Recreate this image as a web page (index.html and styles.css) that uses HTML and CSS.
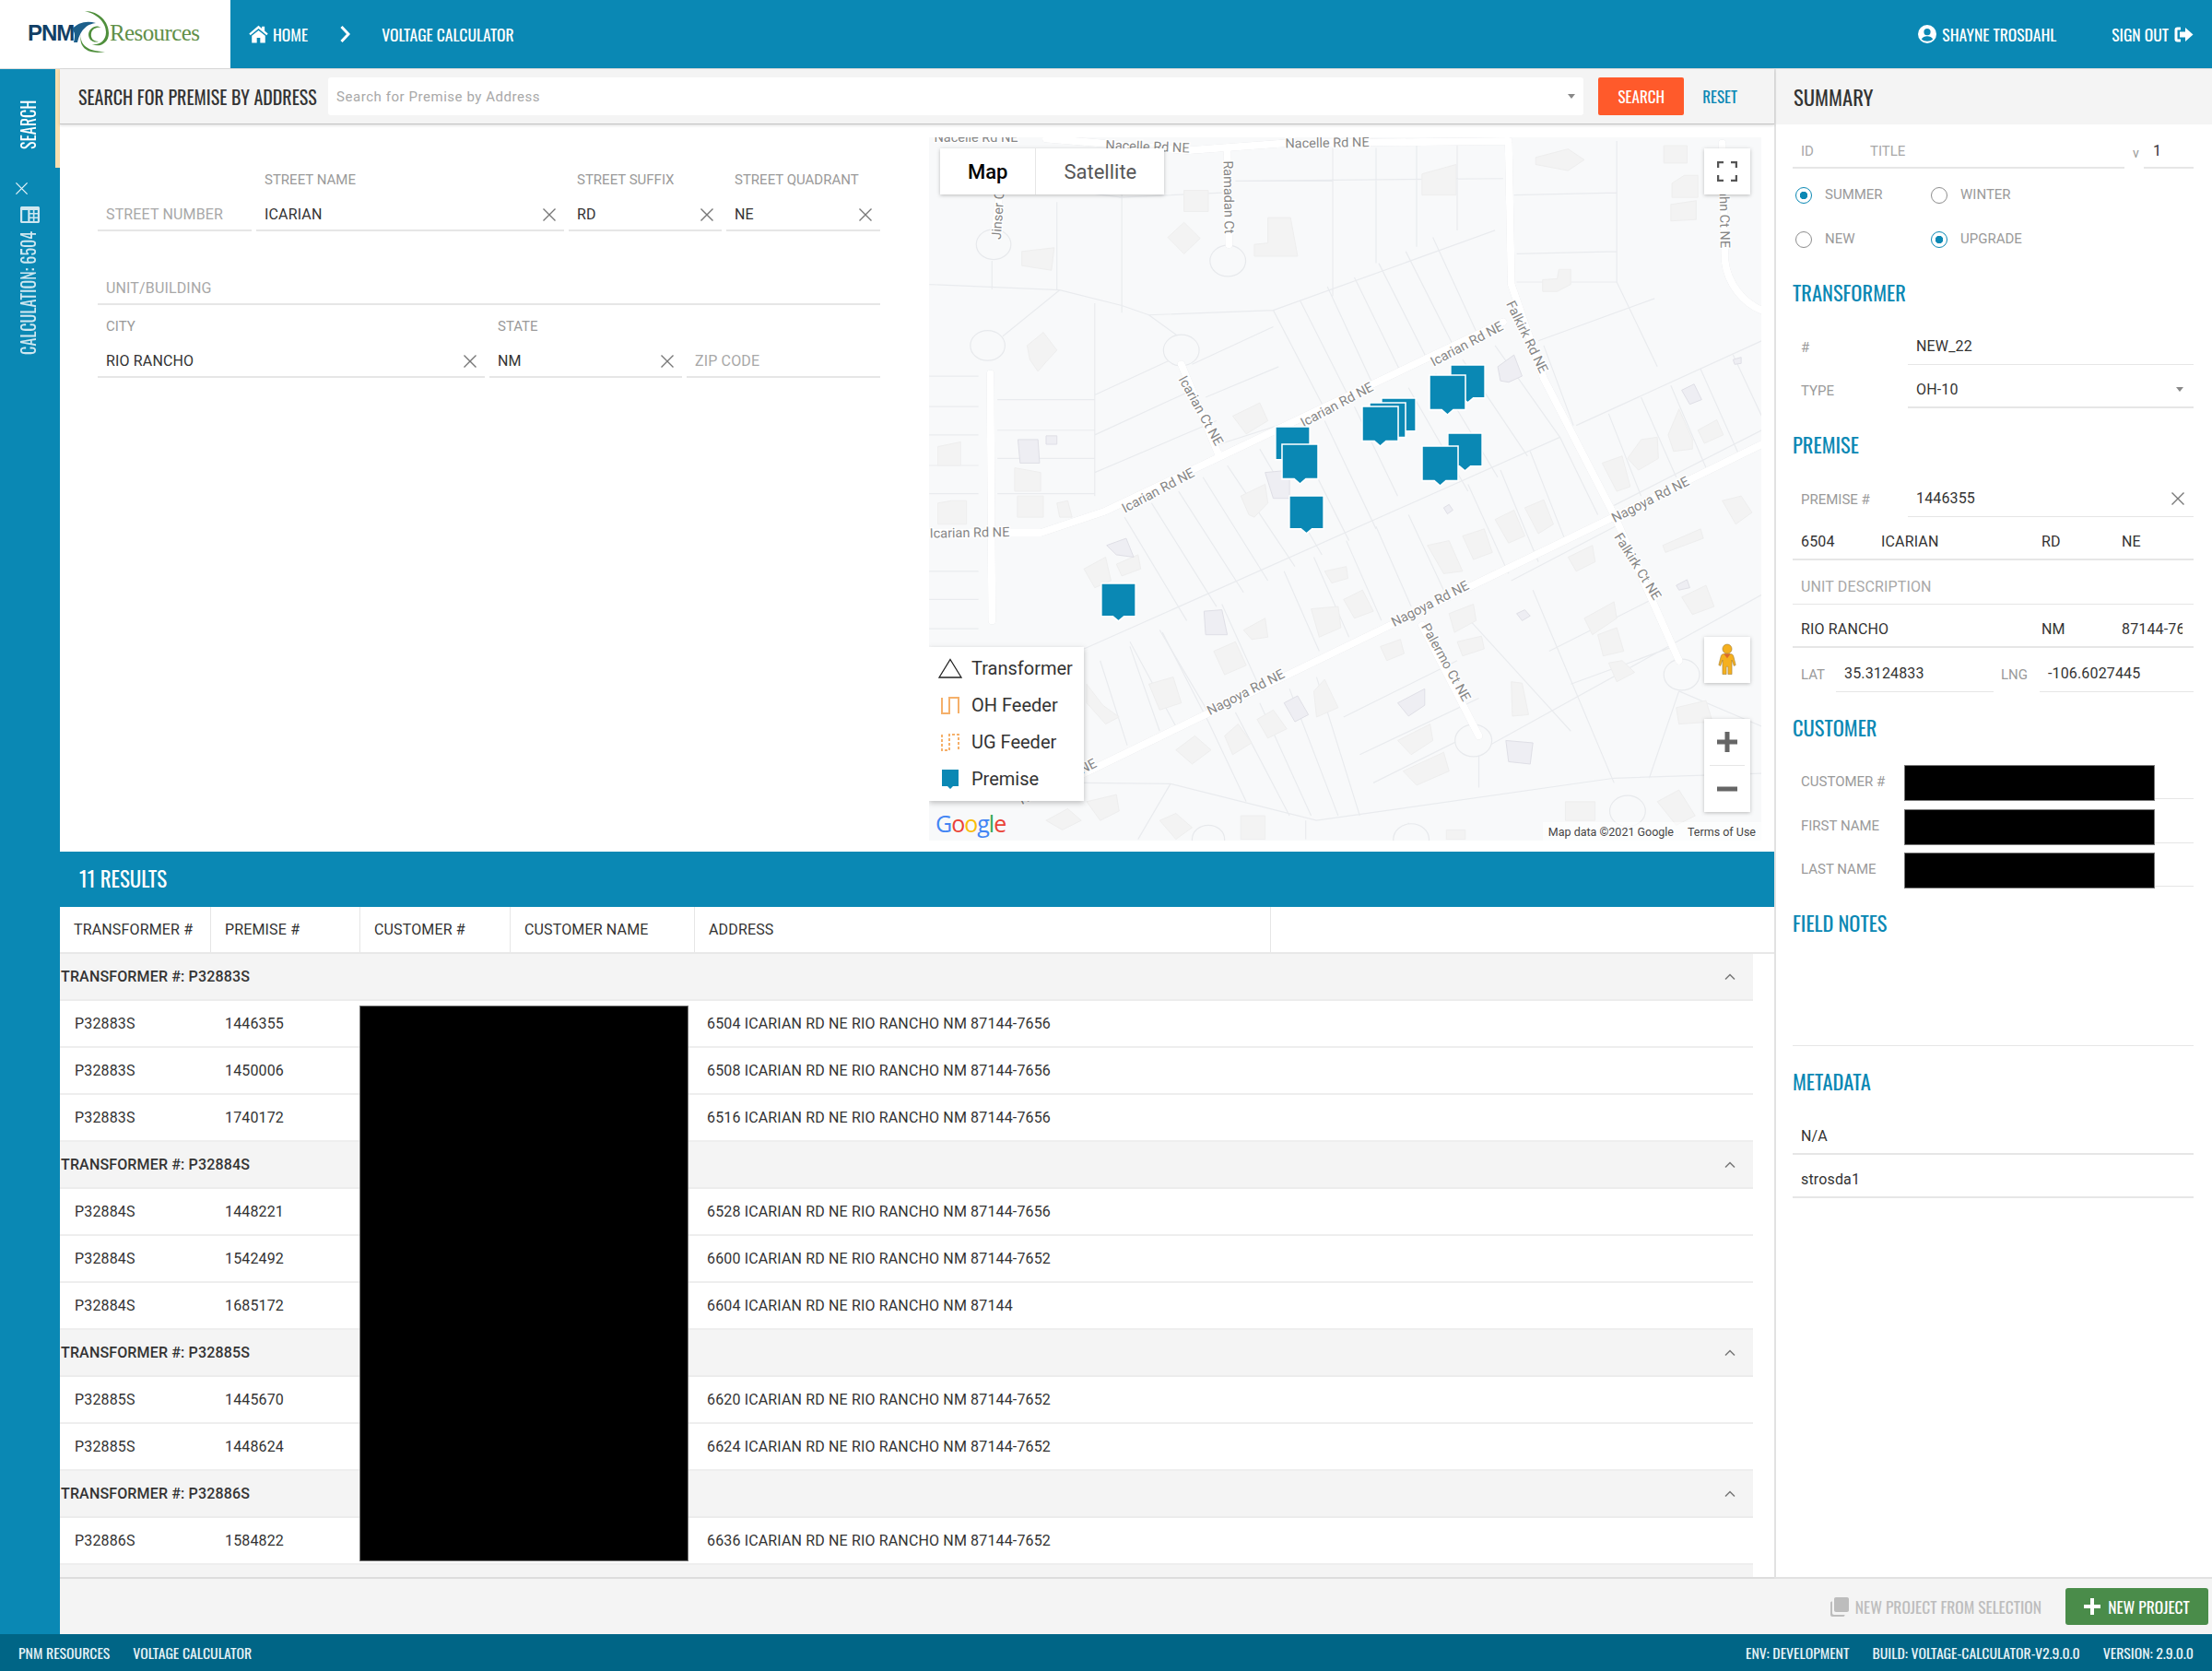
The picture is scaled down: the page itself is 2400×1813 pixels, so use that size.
FILE: index.html
```html
<!DOCTYPE html>
<html lang="en">
<head>
    <meta charset="UTF-8">
    <title>Voltage Calculator</title>
    <link rel="stylesheet" href="styles.css">
</head>
<body>
    <svg class="sprite" width="0" height="0">
        <symbol id="i-x" viewBox="0 0 16 16"><path d="M1.500 1.500 14.500 14.500M14.500 1.500 1.500 14.500" fill="none" stroke="currentColor" stroke-width="1.400"/></symbol>
        <symbol id="i-up" viewBox="0 0 16 16"><path d="M3 10.500 8 5.500 13 10.500" fill="none" stroke="currentColor" stroke-width="1.500"/></symbol>
        <symbol id="i-pin" viewBox="0 0 42 46"><path d="M1 1H41V39.500H27.500L21 45 14.500 39.500H1Z" fill="#0a88b4" stroke="#fff" stroke-width="1.600"/></symbol>
    </svg>

    <header class="topbar">
        <div class="logo">
            <span class="logo-pnm">PNM</span>
            <span class="logo-res">Resources</span>
            <svg class="logo-swoosh" viewBox="0 0 250 74" width="250" height="74">
                <path d="M78 32C84 24 95 22 104 25 96 26 88 30 84 46H80C82 38 81 34 78 32Z" fill="#1d5f8a"/>
                <path d="M92 12C108 12 118 24 118 36 118 47 108 52 100 48 108 49 115 44 115 35 115 24 105 15 92 12Z" fill="#4f8f3c"/>
                <path d="M110 30C104 26 97 30 96 37 96 44 102 47 107 45 101 45 98 41 99 36 100 31 105 29 110 30Z" fill="#4f8f3c"/>
                <path d="M88 36C86 46 92 56 114 56 100 59 84 55 88 36Z" fill="#4f8f3c"/>
            </svg>
        </div>
        <nav class="nav">
            <svg class="nav-home" viewBox="0 0 24 22" width="23" height="20"><path d="M12 .8 .8 10.400 2.300 12.300 12 4.400 21.700 12.300 23.200 10.400 19.300 7.100V1.800H16V4.300Z" fill="#fff"/><path d="M12 6.500 4 13V21.500H10V15.300H14V21.500H20V13Z" fill="#fff"/></svg>
            <a class="nav-link">Home</a>
            <svg class="nav-chevron" viewBox="0 0 12 20" width="12" height="20"><path d="M2.500 2 10 10 2.500 18" fill="none" stroke="#fff" stroke-width="3"/></svg>
            <a class="nav-link">Voltage Calculator</a>
        </nav>
        <div class="user">
            <svg viewBox="0 0 20 20" width="20" height="20"><circle cx="10" cy="10" r="10" fill="#fff"/><circle cx="10" cy="7.700" r="3.600" fill="#0a88b4"/><path d="M3.800 15.600C5 12.800 7.500 12.200 10 12.200S15 12.800 16.200 15.600C13 18.500 7 18.500 3.800 15.600Z" fill="#0a88b4"/></svg>
            <a class="nav-link">Shayne Trosdahl</a>
            <a class="nav-link signout">Sign Out</a>
            <svg viewBox="0 0 21 17" width="21" height="17"><path d="M7 2H3.500C2.500 2 2 2.500 2 3.500V13.500C2 14.500 2.500 15 3.500 15H7" fill="none" stroke="#fff" stroke-width="3"/><path d="M6 5.500H12V1L20.500 8.500 12 16V11.500H6Z" fill="#fff"/></svg>
        </div>
    </header>

    <div class="app">
        <aside class="rail">
            <div class="rail-tab"><span class="rail-text">Search</span></div>
            <svg class="rail-x"><use href="#i-x"/></svg>
            <svg class="rail-calc" viewBox="0 0 19 18" width="21" height="18" preserveAspectRatio="none"><path d="M0 1.500C0 .7.7 0 1.500 0H17.500C18.300 0 19 .7 19 1.500V16.500C19 17.300 18.300 18 17.500 18H1.500C.7 18 0 17.300 0 16.500ZM2 4V16H7.500V4ZM9.500 4V7H12.500V4ZM14 4V7H17V4ZM9.500 8.500V11.500H12.500V8.500ZM14 8.500V11.500H17V8.500ZM9.500 13V16H12.500V13ZM14 13V16H17V13Z" fill="#cfe7f0" fill-rule="evenodd"/></svg>
            <span class="rail-text rail-dim">Calculation: 6504</span>
        </aside>

        <div class="work">
            <div class="work-top">
                <main class="center">
                    <div class="searchbar">
                        <h1>Search for Premise by Address</h1>
                        <div class="searchbox">
                            <span>Search for Premise by Address</span>
                            <i class="caret"></i>
                        </div>
                        <button class="btn-search">Search</button>
                        <a class="btn-reset">Reset</a>
                    </div>

                    <div class="content">
                        <form class="form">
                            <div class="form-row row-street">
                                <div class="field">
                                    <div class="input"><span class="ph">Street Number</span></div>
                                </div>
                                <div class="field">
                                    <label>Street Name</label>
                                    <div class="input">Icarian<svg class="clear"><use href="#i-x"/></svg></div>
                                </div>
                                <div class="field">
                                    <label>Street Suffix</label>
                                    <div class="input">RD<svg class="clear"><use href="#i-x"/></svg></div>
                                </div>
                                <div class="field">
                                    <label>Street Quadrant</label>
                                    <div class="input">NE<svg class="clear"><use href="#i-x"/></svg></div>
                                </div>
                            </div>
                            <div class="form-row row-unit">
                                <div class="field">
                                    <div class="input"><span class="ph">Unit/Building</span></div>
                                </div>
                            </div>
                            <div class="form-row row-city">
                                <div class="field">
                                    <label>City</label>
                                    <div class="input">Rio Rancho<svg class="clear"><use href="#i-x"/></svg></div>
                                </div>
                                <div class="field">
                                    <label>State</label>
                                    <div class="input">NM<svg class="clear"><use href="#i-x"/></svg></div>
                                </div>
                                <div class="field">
                                    <div class="input"><span class="ph">Zip Code</span></div>
                                </div>
                            </div>
                        </form>

                        <div class="map">
                            <svg class="map-base" viewBox="0 0 903 763" width="903" height="763">
                                <g transform="translate(-8 -19) scale(.5869 .5102)">
                                    <path class="lots" d="M14 350L255 362 370 395 420 415 650 405M130 300V360M250 175V362M370 140V395M130 130L370 165M365 165L555 155M580 130L1075 125M840 60V305M760 60V375M990 50V235M915 55V270M1095 160L1285 155M1100 285L1285 280M1285 45V345M1100 345H1285L1360 525M650 405L1060 235M700 385L790 590M750 355L835 565M800 335L885 535M845 305L935 510M895 280L985 485M945 250L1025 450M650 405L745 615M14 545H105M14 610H105M14 670H105M14 735H105M14 795H105M14 960H105M14 1020H105M14 1082H105M140 595H320M140 660H320M140 720H320M140 795H320M320 390V800M320 585L480 500M320 670L500 575M320 750L545 640M500 520L650 440M525 590L660 525M550 690L740 620M255 362L150 460M420 415L510 490M370 395V410"/>
                                    <path class="lots" d="M300 1125L1180 675M375 845L490 1065M425 815L545 1035M475 790L595 1005M520 760L640 980M565 735L690 950M625 700L740 925M690 665L790 895M745 640L840 870M800 610L880 800M900 570L1010 790M950 540L1065 760M1000 510L1120 715M1060 480L1180 675M1180 675L1250 840M385 1110L470 1290M440 1085L530 1260M555 1030L620 1195M670 960L735 1130M725 930L790 1100M785 895L850 1065M840 865L905 1035M900 840L965 1000M1010 775L1085 965M1070 745L1140 940M1125 705L1190 895M1140 470L1355 380M1210 650L1553 470M1270 625L1330 800M1330 590L1395 760M1385 565L1450 740M1440 530L1510 710M1500 500L1553 630M1150 480L1205 650M1280 820L1553 660"/>
                                    <path class="lots" d="M330 1150L380 1330M385 1120L440 1300M445 1090L530 1280 600 1450M580 1260L680 1480M625 1240L720 1480M680 1210L770 1480M730 1185L810 1480M780 1270L990 1150M810 1350L1030 1230M835 1410L1010 1310M1050 1330L1553 1010M1010 1060L1200 1300M1130 1000L1280 1410M1200 1200L1390 1120M1090 980L1290 860M1160 1130L1350 1020M300 1410L460 1412M460 1412L730 1490 1280 1400 1553 1390M400 1530L460 1412M1030 1420V1320M900 1495V1530M710 1490V1530M1400 1215L1345 1400M1400 1215L1553 1290"/>
                                    <g class="culs">
                                        <circle cx="133" cy="265" r="32"/><circle cx="566" cy="300" r="33"/><circle cx="122" cy="480" r="32"/><circle cx="480" cy="490" r="33"/><circle cx="1020" cy="1320" r="34"/><circle cx="1405" cy="1180" r="33"/><circle cx="1305" cy="1470" r="33"/><circle cx="905" cy="1530" r="33"/><circle cx="530" cy="1530" r="30"/>
                                    </g>
                                    <path class="bld" d="M925 115L988 95V160H925ZM485 150H530V195H485ZM455 250L485 218 515 252 485 285ZM185 280L245 272 240 320 185 310ZM640 208H682L695 290H615V265L640 262ZM1135 80L1195 62 1225 85 1195 108 1135 95ZM1372 55H1415V92H1372ZM1387 135L1410 118H1435V165H1387ZM1385 180L1432 172V212L1385 215ZM1148 340L1175 338 1178 318H1200V350L1175 365H1148ZM195 480L225 452 250 490 230 515 215 535 200 510ZM575 630L625 602 640 640 600 668ZM30 695L72 685V735H30ZM172 740L220 750V790H172ZM30 815L55 810H83V860H30ZM177 800H225V845H177ZM250 815L270 810 278 845H255ZM1380 670L1400 615 1425 680V700L1390 705ZM1435 660L1470 638 1482 670 1447 688ZM590 800L635 775 640 815 615 845 605 840ZM300 955L340 930 350 980 320 995ZM360 945L400 925 405 955 370 970ZM1000 885L1040 870 1055 920 1020 935ZM935 905L975 895 1000 960 965 965ZM1060 850L1095 830 1115 885 1085 900ZM1115 825L1150 808 1168 860 1140 880ZM1258 730L1295 715 1310 780 1285 790ZM1305 720L1330 680 1360 675 1362 720 1325 745ZM1480 810L1515 800 1535 835 1505 860ZM1370 905L1440 870 1445 890 1375 920ZM1195 930L1240 905 1245 940 1210 960ZM1405 1015L1450 990 1465 1035 1425 1052ZM1225 1060L1280 1025 1285 1060 1240 1095ZM745 960L785 950 788 975 758 985ZM720 1040L770 1035 775 1080 735 1100ZM780 1020L815 1000 835 1045 800 1060ZM595 1085L635 1060 640 1100 610 1105ZM540 1130L580 1110 600 1160 560 1180ZM848 1120L885 1105 892 1135 860 1150ZM975 1050L1020 1030 1025 1065 985 1090ZM990 1110L1035 1098 1040 1125 1000 1140ZM1250 1095L1285 1080 1298 1130 1260 1140ZM1270 1155L1295 1150 1318 1175 1285 1195ZM420 1200L465 1185 480 1240 440 1255ZM305 1200L335 1245 365 1270 340 1285 305 1240ZM725 1215L745 1190 770 1250 730 1270ZM620 1275L650 1255 675 1295 640 1315ZM560 1310L585 1285 610 1325 575 1350ZM470 1340L505 1310 535 1340 500 1370ZM1090 1195L1110 1198 1122 1265 1092 1268ZM880 1320L940 1285 945 1320 905 1350ZM890 1385L965 1345 975 1385 915 1415ZM1395 1250L1450 1235 1462 1280 1400 1285ZM305 1450L360 1435 365 1470 330 1490ZM230 1490L270 1465 295 1490 260 1510ZM440 1490L470 1475 500 1505 470 1530ZM590 1480H635V1530H590ZM1190 1450H1245V1490H1190ZM1360 1450L1400 1425 1430 1480 1395 1500ZM970 1510H1005V1530H970Z"/>
                                    <path class="bld bld-tint" d="M178 680H215L218 730H182ZM230 672H250V690H230ZM1065 525L1095 500 1110 545 1085 558 1070 555ZM1405 575L1428 562 1442 595 1420 605ZM1500 510L1515 505V518L1503 520ZM635 750L680 745V805H650ZM342 905L378 890 392 930 360 925ZM965 825L975 818 982 830 972 838ZM1395 990L1415 978 1420 995 1400 1000ZM522 1045L555 1042 565 1095H525ZM1100 1050L1115 1042 1125 1055 1110 1065ZM670 1240L695 1225 715 1265 690 1280ZM880 1240L930 1210V1245L900 1268ZM1080 1320L1130 1325 1125 1370 1085 1365Z"/>
                                    <g class="roads">
                                        <path d="M14 878H220L340 832 545 720 1075 430M300 1390L1270 850 1553 690M1085 50L1090 350 1150 550 1280 840 1400 1150M230 40L490 65 670 50 1085 45M565 65L568 265M145 150L135 235M480 520L550 715M925 1075L1030 1310M127 540L130 1065M1480 50L1485 300C1490 350 1520 390 1553 405"/>
                                    </g>
                                </g>
                                <g class="map-labels">
                                    <text transform="translate(432 7) rotate(-1)">Nacelle Rd NE</text>
                                    <text transform="translate(237 11) rotate(2)">Nacelle Rd NE</text>
                                    <text transform="translate(51 1)">Nacelle Rd NE</text>
                                    <text transform="translate(324 65) rotate(89)">Ramadan Ct</text>
                                    <text transform="translate(76 82) rotate(-86)">Jinser Ct</text>
                                    <text transform="translate(862 83) rotate(89)">Hahn Ct NE</text>
                                    <text transform="translate(584 225) rotate(-28)">Icarian Rd NE</text>
                                    <text transform="translate(443 291) rotate(-28)">Icarian Rd NE</text>
                                    <text transform="translate(249 384) rotate(-28)">Icarian Rd NE</text>
                                    <text transform="translate(44 430) rotate(-1)">Icarian Rd NE</text>
                                    <text transform="translate(294 297) rotate(61)">Icarian Ct NE</text>
                                    <text transform="translate(648 217) rotate(64)">Falkirk Rd NE</text>
                                    <text transform="translate(783 394) rotate(-27)">Nagoya Rd NE</text>
                                    <text transform="translate(544 507) rotate(-27)">Nagoya Rd NE</text>
                                    <text transform="translate(344 603) rotate(-27)">Nagoya Rd NE</text>
                                    <text transform="translate(140 700) rotate(-27)">Nagoya Rd NE</text>
                                    <text transform="translate(768 466) rotate(58)">Falkirk Ct NE</text>
                                    <text transform="translate(560 570) rotate(61)">Palermo Ct NE</text>
                                </g>
                                <use href="#i-pin" x="375" y="313" width="39" height="43"/>
                                <use href="#i-pin" x="382" y="332" width="41" height="45"/>
                                <use href="#i-pin" x="390" y="388" width="39" height="43"/>
                                <use href="#i-pin" x="490" y="282" width="39" height="43"/>
                                <use href="#i-pin" x="477" y="287" width="41" height="45"/>
                                <use href="#i-pin" x="469" y="291" width="41" height="45"/>
                                <use href="#i-pin" x="565" y="246" width="39" height="43"/>
                                <use href="#i-pin" x="542" y="257" width="41" height="45"/>
                                <use href="#i-pin" x="562" y="320" width="39" height="43"/>
                                <use href="#i-pin" x="534" y="334" width="41" height="45"/>
                                <use href="#i-pin" x="186" y="483" width="39" height="43"/>
                            </svg>

                            <div class="map-type">
                                <span class="map-type-on">Map</span>
                                <span>Satellite</span>
                            </div>
                            <div class="map-btn map-full">
                                <svg viewBox="0 0 22 22" width="22" height="22"><path d="M1 7V1H7M15 1H21V7M21 15V21H15M7 21H1V15" fill="none" stroke="#555" stroke-width="2.500"/></svg>
                            </div>
                            <div class="map-btn map-peg">
                                <svg viewBox="0 0 24 38" width="22" height="36"><circle cx="12" cy="6" r="5.500" fill="#f5b01e" stroke="#a5823c" stroke-width=".7"/><path d="M8 12H16C18 12 19 13 19.500 15L22 25 20 26 17.500 19V36H13V27H11V36H6.500V19L4 26 2 25 4.500 15C5 13 6 12 8 12Z" fill="#f5b01e" stroke="#a5823c" stroke-width=".7"/><path d="M8 12 12 17 16 12Z" fill="#dc6a2a"/></svg>
                            </div>
                            <div class="map-btn map-zoom">
                                <svg viewBox="0 0 22 22" width="22" height="22"><path d="M11 0V22M0 11H22" stroke="#666" stroke-width="5"/></svg>
                                <i></i>
                                <svg viewBox="0 0 22 22" width="22" height="22"><path d="M0 11H22" stroke="#666" stroke-width="5"/></svg>
                            </div>

                            <ul class="legend">
                                <li><svg viewBox="0 0 26 22" width="26" height="22"><path d="M13 1.500 25 21H1Z" fill="none" stroke="#222" stroke-width="1.300"/></svg>Transformer</li>
                                <li><svg viewBox="0 0 26 22" width="26" height="22"><path d="M4 3V20H12V3H22V20" fill="none" stroke="#f5b06a" stroke-width="2"/></svg>OH Feeder</li>
                                <li><svg viewBox="0 0 26 22" width="26" height="22"><path d="M4 3V20H12V3H22V20" fill="none" stroke="#f5b06a" stroke-width="2" stroke-dasharray="3 2"/></svg>UG Feeder</li>
                                <li><svg viewBox="0 0 26 22" width="26" height="22"><path d="M4 1H22V19H16L13 22 10 19H4Z" fill="#0a88b4"/></svg>Premise</li>
                            </ul>

                            <div class="google"><b class="g-b">G</b><b class="g-r">o</b><b class="g-y">o</b><b class="g-b">g</b><b class="g-g">l</b><b class="g-r">e</b></div>
                            <div class="attrib"><span>Map data ©2021 Google</span><span>Terms of Use</span></div>
                        </div>
                    </div>

                    <section class="results">
                        <h2>11 Results</h2>
                        <div class="thead">
                            <div>Transformer #</div>
                            <div>Premise #</div>
                            <div>Customer #</div>
                            <div>Customer Name</div>
                            <div>Address</div>
                        </div>
                        <div class="tbody">
                            <div class="group">Transformer #: P32883S<svg><use href="#i-up"/></svg></div>
                            <div class="trow"><span>P32883S</span><span>1446355</span><span></span><span></span><span>6504 Icarian Rd NE Rio Rancho NM 87144-7656</span></div>
                            <div class="trow"><span>P32883S</span><span>1450006</span><span></span><span></span><span>6508 Icarian Rd NE Rio Rancho NM 87144-7656</span></div>
                            <div class="trow"><span>P32883S</span><span>1740172</span><span></span><span></span><span>6516 Icarian Rd NE Rio Rancho NM 87144-7656</span></div>
                            <div class="group">Transformer #: P32884S<svg><use href="#i-up"/></svg></div>
                            <div class="trow"><span>P32884S</span><span>1448221</span><span></span><span></span><span>6528 Icarian Rd NE Rio Rancho NM 87144-7656</span></div>
                            <div class="trow"><span>P32884S</span><span>1542492</span><span></span><span></span><span>6600 Icarian Rd NE Rio Rancho NM 87144-7652</span></div>
                            <div class="trow"><span>P32884S</span><span>1685172</span><span></span><span></span><span>6604 Icarian Rd NE Rio Rancho NM 87144</span></div>
                            <div class="group">Transformer #: P32885S<svg><use href="#i-up"/></svg></div>
                            <div class="trow"><span>P32885S</span><span>1445670</span><span></span><span></span><span>6620 Icarian Rd NE Rio Rancho NM 87144-7652</span></div>
                            <div class="trow"><span>P32885S</span><span>1448624</span><span></span><span></span><span>6624 Icarian Rd NE Rio Rancho NM 87144-7652</span></div>
                            <div class="group">Transformer #: P32886S<svg><use href="#i-up"/></svg></div>
                            <div class="trow"><span>P32886S</span><span>1584822</span><span></span><span></span><span>6636 Icarian Rd NE Rio Rancho NM 87144-7652</span></div>
                            <div class="group"></div>
                        </div>
                        <div class="redact redact-table"></div>
                    </section>
                </main>

                <aside class="summary">
                    <div class="summary-head">Summary</div>
                    <div class="summary-body">
                        <div class="srow-pair">
                            <div class="srow srow-title"><span class="sl sl-id ph">ID</span><span class="ph">Title</span></div>
                            <span class="ver">v</span>
                            <div class="srow srow-ver"><span class="sv">1</span></div>
                        </div>
                        <div class="radios first">
                            <div class="radio on">Summer</div>
                            <div class="radio">Winter</div>
                        </div>
                        <div class="radios">
                            <div class="radio">New</div>
                            <div class="radio on">Upgrade</div>
                        </div>

                        <h3 class="h-transformer">Transformer</h3>
                        <div class="srow lab"><span class="sl">#</span><div class="sval">New_22</div></div>
                        <div class="srow lab"><span class="sl">Type</span><div class="sval thick">OH-10<i class="caret"></i></div></div>

                        <h3>Premise</h3>
                        <div class="srow lab"><span class="sl">Premise #</span><div class="sval">1446355<svg class="clear"><use href="#i-x"/></svg></div></div>
                        <div class="srow addr thick-line"><span class="a1">6504</span><span class="a2">Icarian</span><span class="a3">RD</span><span>NE</span></div>
                        <div class="srow addr"><span class="ph">Unit Description</span></div>
                        <div class="srow addr thick-line"><span class="a-city">Rio Rancho</span><span class="a3">NM</span><span class="a-zip">87144-7656</span></div>
                        <div class="srow latlng">
                            <span class="sl lat-l">Lat</span><div class="sval lat-v">35.3124833</div>
                            <span class="sl lng-l">Lng</span><div class="sval lng-v">-106.6027445</div>
                        </div>

                        <h3 class="h-customer">Customer</h3>
                        <div class="srow lab"><span class="sl">Customer #</span><div class="sval"></div><div class="redact redact-one"></div></div>
                        <div class="srow lab"><span class="sl">First Name</span><div class="sval"></div><div class="redact redact-one"></div></div>
                        <div class="srow lab"><span class="sl">Last Name</span><div class="sval"></div><div class="redact redact-one"></div></div>

                        <h3>Field Notes</h3>
                        <div class="notes"></div>

                        <h3 class="h-meta">Metadata</h3>
                        <div class="srow addr thick-line"><span>N/A</span></div>
                        <div class="srow addr thick-line"><span class="plain">strosda1</span></div>
                    </div>
                </aside>
            </div>

            <div class="actionbar">
                <span class="action-off">
                    <svg viewBox="0 0 20 21" width="20" height="21"><path d="M6 0H18C19.200 0 20 .8 20 2V14C20 15.200 19.200 16 18 16H6C4.800 16 4 15.200 4 14V2C4 .8 4.800 0 6 0ZM0 6C0 5 .8 4.500 2 4.500V17C2 18.200 2.800 19 4 19H15.500C15.500 20.200 15 21 14 21H2C.8 21 0 20.200 0 19Z" fill="#bdbdbd"/></svg>
                    New Project from Selection
                </span>
                <button class="btn-new">
                    <svg viewBox="0 0 18 18" width="18" height="18"><path d="M9 0V18M0 9H18" stroke="#fff" stroke-width="4"/></svg>
                    New Project
                </button>
            </div>
        </div>
    </div>

    <footer class="footer">
        <span>PNM Resources</span>
        <span>Voltage Calculator</span>
        <span class="footer-right">Env: Development</span>
        <span>Build: voltage-calculator-v2.9.0.0</span>
        <span>Version: 2.9.0.0</span>
    </footer>
</body>
</html>
```
FILE: styles.css
```css
:root {
    --blue: #0a88b4;
    --dark-blue: #006586;
    --line: #e6e6e6;
    --grey-bg: #f4f4f4;
    --label: #9a9a9a;
    --text: #333;
}

* {
    margin: 0;
    padding: 0;
    box-sizing: border-box;
}

body {
    width: 2400px;
    height: 1813px;
    overflow: hidden;
    display: flex;
    flex-direction: column;
    font-family: Roboto, sans-serif;
    font-size: 16px;
    color: var(--text);
    background: #fff;
}

.sprite {
    position: absolute;
}

.ph {
    color: #a8a8a8;
}

/* top bar */
.topbar {
    height: 75px;
    flex: none;
    display: flex;
    align-items: center;
    background: var(--blue);
    border-bottom: 1px solid #ddd;
    font-family: Oswald, sans-serif;
}

.logo {
    position: relative;
    width: 250px;
    height: 74px;
    background: #fff;
    display: flex;
    align-items: center;
    padding: 0 0 3px 30px;
}

.logo-pnm {
    width: 89px;
    font-family: "Liberation Sans", sans-serif;
    font-weight: 700;
    font-size: 24px;
    letter-spacing: -1px;
    color: #123f66;
}

.logo-res {
    font-family: "Liberation Serif", serif;
    font-size: 25px;
    letter-spacing: -.6px;
    color: #5f8f48;
}

.logo-swoosh {
    position: absolute;
    left: 0;
    top: 0;
}

.nav {
    display: flex;
    align-items: center;
    flex: 1;
    padding-left: 19px;
}

.nav-link {
    font-size: 17.600px;
    color: #fff;
    text-transform: uppercase;
}

.nav-home {
    margin-right: 4px;
}

.nav-chevron {
    margin: 0 34px 0 34px;
}

.user {
    display: flex;
    align-items: center;
    padding-right: 20px;
}

.user .nav-link {
    margin-left: 6px;
}

.user .signout {
    margin: 0 6px 0 60px;
}

/* layout */
.app {
    flex: 1;
    display: flex;
    min-height: 0;
}

.rail {
    width: 65px;
    flex: none;
    display: flex;
    flex-direction: column;
    align-items: center;
    background: var(--blue);
}

.rail-tab {
    width: 65px;
    height: 107px;
    padding-top: 35px;
    display: flex;
    justify-content: center;
    border-right: 5px solid #fadfb0;
}

.rail-text {
    writing-mode: vertical-rl;
    transform: rotate(180deg) scaleX(1.120);
    font-family: Oswald, sans-serif;
    font-size: 18px;
    color: #fff;
    text-transform: uppercase;
}

.rail-tab .rail-text {
    height: 52px;
}

.rail-dim {
    margin: 9px 5px 0 0;
    color: #cfe7f0;
}

.rail-x {
    width: 15px;
    height: 15px;
    margin: 15px 18px 0 0;
    color: #e4f2f7;
}

.rail-calc {
    margin-top: 12px;
}

.work {
    flex: 1;
    display: flex;
    flex-direction: column;
    min-width: 0;
}

.work-top {
    height: 1638px;
    display: flex;
}

.center {
    width: 1860px;
    display: flex;
    flex-direction: column;
}

/* search bar */
.searchbar {
    height: 60px;
    flex: none;
    display: flex;
    align-items: center;
    padding: 0 40px 0 20px;
    background: var(--grey-bg);
    border-bottom: 1px solid #c4c4c4;
    box-shadow: 0 1px 3px rgba(0, 0, 0, .15);
    position: relative;
}

h1 {
    width: 271px;
    font-family: Oswald, sans-serif;
    font-size: 20px;
    font-weight: 400;
    text-transform: uppercase;
    color: #333;
    white-space: nowrap;
}

.searchbox {
    flex: 1;
    height: 41px;
    padding: 0 9px;
    display: flex;
    align-items: center;
    justify-content: space-between;
    background: #fff;
    border-radius: 3px;
    font-size: 15px;
    color: #a8a8a8;
    letter-spacing: .55px;
}

.caret {
    display: inline-block;
    border-left: 4.500px solid transparent;
    border-right: 4.500px solid transparent;
    border-top: 5px solid #888;
}

.btn-search {
    width: 93px;
    height: 41px;
    margin-left: 16px;
    border: none;
    border-radius: 2px;
    background: #ff5a2b;
    color: #fff;
    font-family: Oswald, sans-serif;
    font-size: 17px;
    text-transform: uppercase;
}

.btn-reset {
    margin-left: 20px;
    font-family: Oswald, sans-serif;
    font-size: 17px;
    color: var(--blue);
    text-transform: uppercase;
}

/* search form */
.content {
    height: 789px;
    flex: none;
    display: flex;
    padding: 14px 14px 12px 41px;
}

.form {
    width: 849px;
    margin-right: 53px;
    padding-top: 36px;
    flex: none;
}

.form-row {
    display: grid;
    gap: 5px;
    align-items: end;
}

.row-street {
    grid-template-columns: 167px 334px 166px 167px;
}

.row-unit {
    margin-top: 40px;
}

.row-city {
    margin-top: 13px;
    grid-template-columns: 420px 209px 210px;
}

.field label {
    display: block;
    height: 20px;
    line-height: 20px;
    margin-bottom: 6px;
    padding-left: 9px;
    color: var(--label);
    font-size: 15px;
    text-transform: uppercase;
}

.input {
    height: 40px;
    padding: 5px 9px 0;
    display: flex;
    align-items: center;
    justify-content: space-between;
    border-bottom: 2px solid var(--line);
    letter-spacing: .15px;
    text-transform: uppercase;
    white-space: nowrap;
}

.clear {
    width: 16px;
    height: 16px;
    color: #777;
}

.input .clear {
    margin-right: -1px;
}

/* map */
.map {
    position: relative;
    width: 903px;
    height: 763px;
    flex: none;
    overflow: hidden;
    background: #f8f9fa;
    font-family: Roboto, sans-serif;
}

.map-base {
    display: block;
}

.lots {
    fill: none;
    stroke: #e9ebee;
    stroke-width: 1.200px;
    vector-effect: non-scaling-stroke;
}

.culs circle {
    fill: #f8f9fa;
    stroke: #e7e9ec;
    stroke-width: 1.200px;
    vector-effect: non-scaling-stroke;
}

.bld {
    fill: #f3f3f3;
    stroke: #eeeeee;
    stroke-width: 1px;
    vector-effect: non-scaling-stroke;
}

.bld-tint {
    fill: #eeeef3;
    stroke: #dfdfe6;
}

.roads path {
    fill: none;
    stroke: #fff;
    stroke-width: 8px;
    stroke-linecap: round;
    stroke-linejoin: round;
    vector-effect: non-scaling-stroke;
    filter: drop-shadow(0 0 .6px #d8dade);
}

.map-labels text {
    font-family: Roboto, sans-serif;
    font-size: 14.500px;
    fill: #868686;
    text-anchor: middle;
    dominant-baseline: middle;
    paint-order: stroke;
    stroke: #fff;
    stroke-width: 2.500px;
}

.map-type {
    position: absolute;
    left: 12px;
    top: 12px;
    height: 50px;
    display: flex;
    background: #fff;
    box-shadow: 0 1px 4px rgba(0, 0, 0, .25);
    font-size: 22px;
    color: #565656;
}

.map-type span {
    display: flex;
    align-items: center;
    padding: 0 30px;
}

.map-type-on {
    color: #000;
    font-weight: 500;
    border-right: 1px solid #e6e6e6;
}

.map-btn {
    position: absolute;
    left: 841px;
    width: 50px;
    display: flex;
    flex-direction: column;
    align-items: center;
    justify-content: center;
    background: #fff;
    box-shadow: 0 1px 4px rgba(0, 0, 0, .25);
}

.map-full {
    top: 12px;
    height: 50px;
}

.map-peg {
    top: 542px;
    height: 50px;
}

.map-zoom {
    top: 631px;
    height: 101px;
    gap: 14px;
}

.map-zoom i {
    width: 38px;
    height: 1px;
    background: #e6e6e6;
}

.legend {
    position: absolute;
    left: 0;
    top: 553px;
    width: 168px;
    height: 167px;
    padding: 3px 0 0 10px;
    list-style: none;
    background: #fff;
    box-shadow: 0 2px 6px rgba(0, 0, 0, .25);
    font-size: 20px;
    color: #333;
}

.legend li {
    height: 40px;
    display: flex;
    align-items: center;
    gap: 10px;
}

.google {
    position: absolute;
    left: 7px;
    bottom: 3px;
    font-family: "Open Sans", sans-serif;
    font-size: 25px;
    line-height: 32px;
    letter-spacing: -1px;
}

.google b {
    font-weight: 500;
}

.g-b { color: #4285f4; }
.g-r { color: #ea4335; }
.g-y { color: #fbbc05; }
.g-g { color: #34a853; }

.attrib {
    position: absolute;
    right: 0;
    bottom: 0;
    height: 20px;
    display: flex;
    align-items: center;
    gap: 15px;
    padding: 0 6px;
    background: rgba(255, 255, 255, .6);
    font-size: 12.500px;
    color: #444;
}

/* results */
.results {
    position: relative;
    flex: 1;
    min-height: 0;
    display: flex;
    flex-direction: column;
    border-bottom: 2px solid #ddd;
}

h2 {
    height: 60px;
    flex: none;
    padding-left: 21px;
    line-height: 58px;
    background: var(--blue);
    color: #fff;
    font-family: Oswald, sans-serif;
    font-size: 23px;
    font-weight: 400;
    text-transform: uppercase;
}

.thead {
    height: 51px;
    flex: none;
    display: grid;
    grid-template-columns: 164px 162px 163px 200px 625px;
    border-bottom: 2px solid #e8e8e8;
    letter-spacing: .15px;
    text-transform: uppercase;
}

.thead div {
    display: flex;
    align-items: center;
    padding-left: 15px;
    border-right: 1px solid var(--line);
    white-space: nowrap;
}

.tbody {
    flex: 1;
    min-height: 0;
    overflow: hidden;
    width: 1837px;
}

.group {
    height: 51px;
    display: flex;
    align-items: center;
    justify-content: space-between;
    padding-right: 17px;
    padding-left: 1px;
    background: var(--grey-bg);
    border-bottom: 2px solid #ececec;
    font-weight: 500;
    letter-spacing: .15px;
    text-transform: uppercase;
}

.group svg {
    width: 16px;
    height: 16px;
    color: #777;
}

.trow {
    height: 51px;
    display: grid;
    grid-template-columns: 163px 162px 163px 198px 1fr;
    align-items: center;
    border-bottom: 2px solid #eeeeee;
    letter-spacing: .15px;
    text-transform: uppercase;
}

.trow span {
    padding-left: 16px;
    white-space: nowrap;
}

.redact {
    position: absolute;
    background: #000;
    border: 1px solid #777;
}

.redact-table {
    left: 325px;
    top: 167px;
    width: 357px;
    height: 603px;
}

/* summary panel */
.summary {
    width: 475px;
    flex: none;
    border-left: 2px solid #e2e2e2;
    border-bottom: 2px solid #e2e2e2;
}

.summary-head {
    height: 60px;
    padding-left: 19px;
    line-height: 60px;
    background: var(--grey-bg);
    font-family: Oswald, sans-serif;
    font-size: 22.700px;
    text-transform: uppercase;
    color: #333;
}

.summary-body {
    padding: 0 20px 0 18px;
    font-size: 15px;
    text-transform: uppercase;
}

.srow {
    position: relative;
    height: 47.500px;
    display: flex;
    align-items: flex-end;
}

.srow-pair {
    display: flex;
    align-items: flex-end;
    height: 48px;
}

.srow-title {
    width: 360px;
    height: 48px;
    padding: 0 0 8px 9px;
    border-bottom: 2px solid var(--line);
}

.sl-id {
    width: 75px;
}

.ver {
    width: 21px;
    padding: 0 0 9px 9px;
    color: var(--label);
    font-size: 14px;
    text-transform: lowercase;
}

.srow-ver {
    flex: 1;
    height: 48px;
    padding: 0 0 8px 10px;
    border-bottom: 2px solid var(--line);
    font-size: 16px;
}

.radios {
    height: 48px;
    display: flex;
    align-items: center;
    padding-left: 3px;
    color: var(--label);
}

.radios.first {
    margin-top: 4px;
}

.radio {
    position: relative;
    width: 147px;
    padding-left: 32px;
}

.radio::before {
    content: "";
    position: absolute;
    left: 0;
    top: 50%;
    width: 16px;
    height: 16px;
    margin-top: -8px;
    border: 1.500px solid #8d8d8d;
    border-radius: 50%;
}

.radio.on::before {
    border-color: var(--blue);
    background: radial-gradient(circle, var(--blue) 0, var(--blue) 4px, #fff 4.500px);
}

h3 {
    height: 60px;
    margin-top: 10px;
    line-height: 58px;
    font-family: Oswald, sans-serif;
    font-size: 22.500px;
    font-weight: 400;
    color: var(--blue);
    text-transform: uppercase;
}

.h-transformer {
    margin-top: 5px;
}

.h-customer {
    margin-top: 9px;
}

.h-meta {
    line-height: 56px;
}

.lab .sl {
    width: 125px;
    padding: 0 0 10px 9px;
    color: var(--label);
    white-space: nowrap;
}

.sval {
    flex: 1;
    height: 100%;
    padding: 0 9px 10px;
    display: flex;
    align-items: flex-end;
    justify-content: space-between;
    border-bottom: 1px solid var(--line);
    font-size: 16px;
    letter-spacing: .15px;
}

.sval.thick {
    border-bottom-width: 2px;
    padding: 0 11px 9px 9px;
}

.sval .caret {
    margin-bottom: 7px;
}

.sval .clear {
    margin-bottom: 1px;
}

.addr {
    padding: 0 0 9px 9px;
    border-bottom: 1px solid var(--line);
    font-size: 16px;
    letter-spacing: .15px;
    white-space: nowrap;
}

.thick-line {
    border-bottom-width: 2px;
}

.a1 {
    width: 87px;
}

.a2 {
    width: 174px;
}

.a3 {
    width: 87px;
}

.a-city {
    width: 261px;
}

.a-zip {
    width: 66px;
    overflow: hidden;
}

.plain {
    text-transform: none;
}

.latlng {
    align-items: stretch;
}

.latlng .sl {
    align-self: flex-end;
    padding-bottom: 10px;
    color: var(--label);
}

.lat-l {
    width: 47px;
    padding-left: 9px;
}

.lat-v {
    flex: none;
    width: 171px;
}

.lng-l {
    width: 50px;
    padding-left: 8px;
}

.redact-one {
    left: 121px;
    bottom: -2px;
    width: 272px;
    height: 39px;
}

.notes {
    height: 103px;
    border-bottom: 1px solid var(--line);
}

/* action bar and footer */
.actionbar {
    flex: 1;
    display: flex;
    align-items: center;
    justify-content: flex-end;
    gap: 26px;
    padding-right: 4px;
    background: var(--grey-bg);
    font-family: Oswald, sans-serif;
    text-transform: uppercase;
}

.action-off {
    display: flex;
    align-items: center;
    gap: 7px;
    font-size: 17.500px;
    color: #bdbdbd;
}

.btn-new {
    width: 155px;
    height: 40px;
    display: flex;
    align-items: center;
    justify-content: center;
    gap: 8px;
    border: none;
    border-radius: 3px;
    background: #4a8c4a;
    color: #fff;
    font-family: Oswald, sans-serif;
    font-size: 17.500px;
    text-transform: uppercase;
}

.footer {
    height: 40px;
    flex: none;
    display: flex;
    align-items: center;
    gap: 25px;
    padding: 0 20px;
    background: var(--dark-blue);
    color: #e8f3f7;
    font-family: Oswald, sans-serif;
    font-size: 15.800px;
    text-transform: uppercase;
}

.footer-right {
    margin-left: auto;
}
```
